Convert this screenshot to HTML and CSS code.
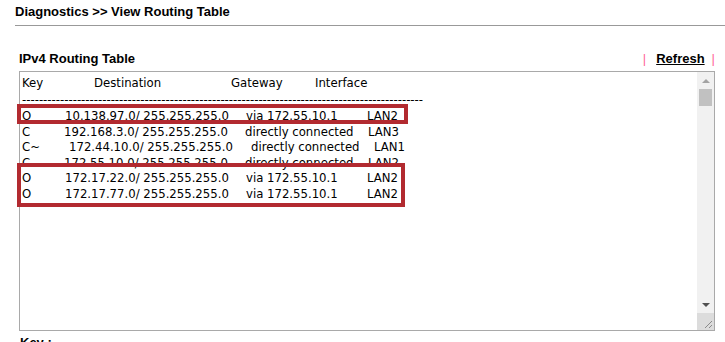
FILE: index.html
```html
<!DOCTYPE html>
<html>
<head>
<meta charset="utf-8">
<title>View Routing Table</title>
<link rel="stylesheet" href="styles.css">
</head>
<body>
<div class="page-title">Diagnostics &gt;&gt; View Routing Table</div>
<div class="section">
  <div class="sec-head">
    <span class="sec-title">IPv4 Routing Table</span>
    <span class="sec-actions"><span class="bar bar-l">|</span><a class="refresh" href="#">Refresh</a><span class="bar bar-r">|</span></span>
  </div>
  <div class="ta">
    <div class="ta-content">
      <div class="row hdr"><span>Key</span><span>Destination</span><span>Gateway</span><span>Interface</span></div>
      <div class="dashes">------------------------------------------------------------------------------------------------------------------------</div>
      <div class="row o"><span>O</span><span>10.138.97.0/ 255.255.255.0</span><span>via 172.55.10.1</span><span>LAN2</span></div>
      <div class="row c"><span>C</span><span>192.168.3.0/ 255.255.255.0</span><span>directly connected</span><span>LAN3</span></div>
      <div class="row ct"><span>C~</span><span>172.44.10.0/ 255.255.255.0</span><span>directly connected</span><span>LAN1</span></div>
      <div class="row c"><span>C</span><span>172.55.10.0/ 255.255.255.0</span><span>directly connected</span><span>LAN2</span></div>
      <div class="row o"><span>O</span><span>172.17.22.0/ 255.255.255.0</span><span>via 172.55.10.1</span><span>LAN2</span></div>
      <div class="row o"><span>O</span><span>172.17.77.0/ 255.255.255.0</span><span>via 172.55.10.1</span><span>LAN2</span></div>
      <div class="mark mark-1"></div>
      <div class="mark mark-2"></div>
    </div>
    <div class="sb">
      <div class="sb-btn"><span class="arr up"></span></div>
      <div class="sb-track"><div class="sb-thumb"></div></div>
      <div class="sb-btn"><span class="arr down"></span></div>
      <div class="sb-grip">
        <svg width="17" height="17" viewBox="0 0 17 17"><path d="M8 15 L15 8 M12 15 L15 12" stroke="#8a8a8a" stroke-width="1" fill="none"/></svg>
      </div>
    </div>
  </div>
  <div class="legend">Key :</div>
</div>
</body>
</html>
```
FILE: styles.css
```css
html, body {
  margin: 0;
  padding: 0;
  background: #fff;
}
body {
  font-family: "Liberation Sans", Arial, sans-serif;
  font-size: 13px;
  color: #000;
  overflow: hidden;
}
.page-title {
  margin-left: 15px;
  padding: 4px 0 5px;
  line-height: 16px;
  font-weight: bold;
  border-bottom: 1px solid #999;
}
.section {
  margin: 25px 10px 0 19px;
}
.sec-head {
  display: flex;
  justify-content: space-between;
  align-items: center;
  line-height: 16px;
  height: 16px;
}
.sec-title {
  font-weight: bold;
}
.sec-actions {
  display: flex;
  align-items: center;
}
.bar {
  color: #ff6699;
  font-weight: normal;
}
.bar-l { margin-right: 10px; }
.bar-r { margin-left: 7px; }
.refresh {
  color: #000;
  font-weight: bold;
  text-decoration: underline;
}
.ta {
  margin-top: 4px;
  height: 260px;
  box-sizing: border-box;
  border: 1px solid #a9a9a9;
  display: flex;
}
.ta-content {
  flex: 1;
  position: relative;
  padding: 3px 0 0 2px;
  font-family: "DejaVu Sans Condensed", "Liberation Sans", sans-serif;
  font-size: 13px;
  line-height: 15.6px;
  color: #000;
}
.row {
  display: grid;
  grid-template-columns: 43px 181px 121px auto;
  white-space: pre;
}
.row.hdr { grid-template-columns: 72px 137px 84px auto; }
.row.c { grid-template-columns: 42px 181px 123px auto; }
.row.ct { grid-template-columns: 47px 182px 123px auto; }
.dashes {
  width: 401px;
  line-height: 17.4px;
  overflow: hidden;
  white-space: nowrap;
}
.mark {
  position: absolute;
  left: -3px;
  box-sizing: border-box;
  border: 4px solid #b22a30;
}
.mark-1 { top: 32px; width: 391px; height: 20px; }
.mark-2 { top: 91px; width: 388px; height: 44px; }
.sb {
  width: 17px;
  background: #f1f1f1;
  display: flex;
  flex-direction: column;
}
.sb-btn {
  height: 17px;
  display: flex;
  align-items: center;
  justify-content: center;
}
.arr {
  width: 0;
  height: 0;
  border-left: 4px solid transparent;
  border-right: 4px solid transparent;
}
.arr.up { border-bottom: 4px solid #a3a3a3; }
.arr.down { border-top: 4px solid #505050; }
.sb-track {
  flex: 1;
  padding: 0 2px;
}
.sb-thumb {
  height: 17px;
  background: #c1c1c1;
}
.sb-grip {
  height: 17px;
  background: #dcdcdc;
}
.sb-grip svg { display: block; }
.legend {
  margin: 4px 0 0 1px;
  line-height: 16px;
  font-weight: bold;
}
```
